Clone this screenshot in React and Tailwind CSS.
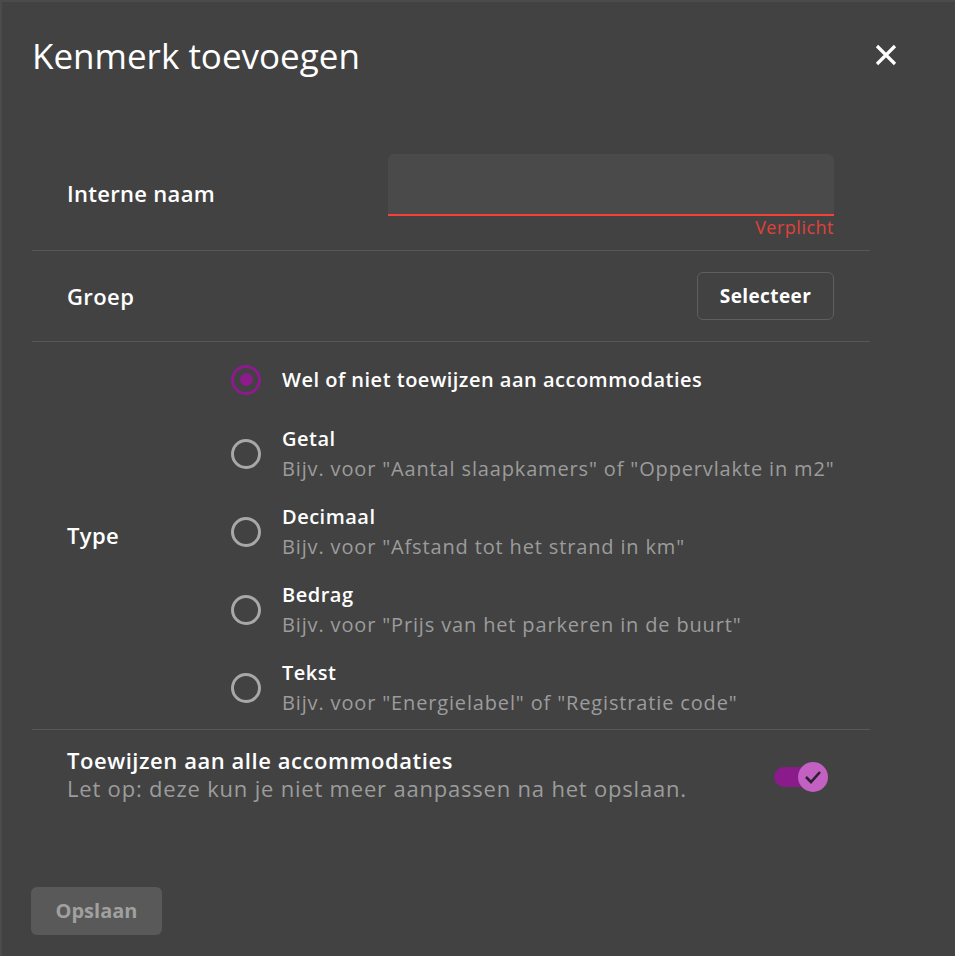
import React from "react";

const options = [
  { title: "Wel of niet toewijzen aan accommodaties", desc: null, checked: true },
  { title: "Getal", desc: 'Bijv. voor "Aantal slaapkamers" of "Oppervlakte in m2"' },
  { title: "Decimaal", desc: 'Bijv. voor "Afstand tot het strand in km"' },
  { title: "Bedrag", desc: 'Bijv. voor "Prijs van het parkeren in de buurt"' },
  { title: "Tekst", desc: 'Bijv. voor "Energielabel" of "Registratie code"' },
];

function Radio({ checked }) {
  return (
    <div
      className={
        "w-[30px] h-[30px] rounded-full border-[3px] flex items-center justify-center shrink-0 " +
        (checked ? "border-[#8e1b8e]" : "border-[#a8a8a8]")
      }
    >
      {checked && <div className="w-[13px] h-[13px] rounded-full bg-[#8e1b8e]" />}
    </div>
  );
}

export default function App() {
  return (
    <div
      className="w-[955px] h-[956px] bg-[#424242] text-white border-l-2 border-t-2 border-[#4b4b4b] flex flex-col"
      style={{ fontFamily: "'Open Sans', 'Noto Sans', sans-serif" }}
    >
      <div className="flex items-center justify-between pl-[30px] pr-[58px] pt-[26px] h-[80px]">
        <h1 className="text-[35px] leading-none text-white">Kenmerk toevoegen</h1>
        <svg width="22" height="22" viewBox="0 0 22 22">
          <path d="M2 2 L20 20 M20 2 L2 20" stroke="white" strokeWidth="3.2" strokeLinecap="butt" />
        </svg>
      </div>

      <div className="ml-[30px] w-[838px] mt-[72px] flex flex-col">
        {/* Interne naam */}
        <div className="flex items-start justify-between pl-[35px] pr-[36px] pb-[14px] border-b border-[#575757]">
          <div className="text-[22px] font-semibold tracking-[0.3px] pt-[23px]">Interne naam</div>
          <div className="flex flex-col items-end w-[446px]">
            <div className="w-full h-[62px] bg-[#4a4a4a] rounded-t-[6px] border-b-2 border-[#f44336]" />
            <div className="text-[18px] text-[#e0413a] mt-[2px] leading-[18px] tracking-[0.5px]">Verplicht</div>
          </div>
        </div>

        {/* Groep */}
        <div className="flex items-center justify-between pl-[35px] pr-[36px] h-[91px] border-b border-[#575757]">
          <div className="text-[22px] font-semibold tracking-[0.4px]">Groep</div>
          <button className="w-[137px] h-[48px] rounded-[6px] border border-[#5f5f5f] text-[19px] font-bold tracking-[0.4px] text-white">
            Selecteer
          </button>
        </div>

        {/* Type */}
        <div className="flex items-center pl-[35px] h-[388px] border-b border-[#575757]">
          <div className="w-[164px] text-[22px] font-semibold tracking-[0.4px]">Type</div>
          <div className="flex flex-col gap-[18px] mt-[10px]">
            {options.map((o) =>
              o.desc ? (
                <div key={o.title} className="flex items-center gap-[21px] h-[60px]">
                  <Radio />
                  <div className="flex flex-col">
                    <div className="text-[20px] font-semibold leading-[30px] tracking-[0.5px]">{o.title}</div>
                    <div className="text-[20px] text-[#9c9c9c] leading-[30px] tracking-[0.85px]">{o.desc}</div>
                  </div>
                </div>
              ) : (
                <div key={o.title} className="flex items-center gap-[21px] h-[32px] mb-[10px]">
                  <Radio checked />
                  <div className="text-[20px] font-semibold tracking-[0.5px]">{o.title}</div>
                </div>
              )
            )}
          </div>
        </div>

        {/* Toewijzen */}
        <div className="flex items-center justify-between pl-[35px] pr-[42px] pt-[16px]">
          <div className="flex flex-col">
            <div className="text-[22px] font-semibold leading-[28px] tracking-[0.55px]">Toewijzen aan alle accommodaties</div>
            <div className="text-[22px] text-[#9c9c9c] leading-[28px] tracking-[0.8px]">Let op: deze kun je niet meer aanpassen na het opslaan.</div>
          </div>
          <div className="relative w-[56px] h-[30px] mt-[6px]">
            <div className="absolute left-[2px] top-[5px] w-[40px] h-[20px] rounded-full bg-[#8b1a8b]" />
            <div className="absolute right-0 top-0 w-[30px] h-[30px] rounded-full bg-[#c261c2] flex items-center justify-center">
              <svg width="18" height="14" viewBox="0 0 18 14">
                <path d="M2 7 L7 12 L16 2" fill="none" stroke="#2d1f2d" strokeWidth="2.6" />
              </svg>
            </div>
          </div>
        </div>
      </div>

      <div className="mt-auto mb-[21px] ml-[29px]">
        <button className="w-[131px] h-[48px] rounded-[6px] bg-[#595959] text-[#a0a0a0] text-[20px] font-bold">
          Opslaan
        </button>
      </div>
    </div>
  );
}
